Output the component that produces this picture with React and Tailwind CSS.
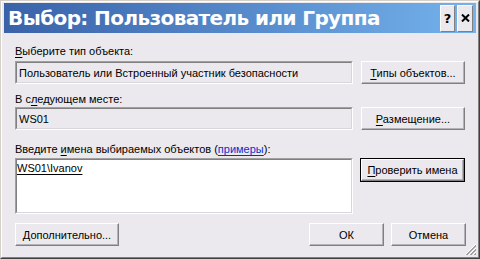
import React from 'react';

const font = { fontFamily: '"Liberation Sans", Arial, sans-serif' };

// classic raised button
const Btn = ({ children, isDefault = false, className = '' }) => (
  <div className={`${isDefault ? 'border border-black' : ''} ${className}`}>
    <div className="h-full flex items-center justify-center border border-t-white border-l-white border-r-[#808080] border-b-[#808080] bg-[#ebe9ed] shadow-[inset_-1px_-1px_#b4b2b6] text-[11px] leading-[14px] text-black">
      {children}
    </div>
  </div>
);

const Field = ({ children, white = false, className = '' }) => (
  <div className={`border border-t-[#a0a0a0] border-l-[#a0a0a0] border-r-white border-b-white ${className}`}>
    <div className={`h-full border border-t-[#808080] border-l-[#808080] border-r-[#d8d6da] border-b-[#d8d6da] ${white ? 'bg-white' : 'bg-[#ebe9ed]'}`}>
      {children}
    </div>
  </div>
);

const U = ({ children }) => <span className="underline underline-offset-2">{children}</span>;

export default function App() {
  return (
    <div className="w-[480px] h-[259px] bg-[#ebe9ed]" style={font}>
      <div className="h-full border border-t-[#d4d0c8] border-l-[#d4d0c8] border-r-[#404040] border-b-[#404040]">
        <div className="h-full border border-t-white border-l-white border-r-[#808080] border-b-[#808080] relative">
          {/* title bar */}
          <div className="mx-[2px] mt-[1px] h-[30px] bg-gradient-to-r from-[#3a62a9] to-[#74b2ec] flex items-center pl-[4px] pr-[3px]">
            <span className="text-white font-bold text-[20px] leading-[24px] tracking-[-0.6px] flex-1 whitespace-nowrap" style={{ fontFamily: '"DejaVu Sans", Verdana, sans-serif' }}>
              Выбор: Пользователь или Группа
            </span>
            <div className="flex gap-[2px]">
              <div className="w-[15px] h-[27px] bg-[#ebe9ed] border border-t-white border-l-white border-r-[#808080] border-b-[#808080] flex items-center justify-center">
                <span className="font-bold text-[13px] leading-none text-black" style={{ fontFamily: '"DejaVu Sans", sans-serif' }}>?</span>
              </div>
              <div className="w-[16px] h-[27px] bg-[#ebe9ed] border border-t-white border-l-white border-r-[#808080] border-b-[#808080] flex items-center justify-center">
                <svg width="9" height="8" viewBox="0 0 9 8">
                  <path d="M1 0.5 L8 7.5 M8 0.5 L1 7.5" stroke="black" strokeWidth="2" />
                </svg>
              </div>
            </div>
          </div>

          {/* body */}
          <div className="pl-[13px] pr-[12px]">
            <div className="mt-[11px] mb-[3px] h-[14px] text-[11px] leading-[14px] text-black">
              <U>В</U>ыберите тип объекта:
            </div>
            <div className="flex gap-[8px] h-[23px]">
              <Field className="w-[338px]">
                <div className="h-full flex items-center pl-[2px] text-[11px] leading-[14px] text-black whitespace-nowrap">
                  Пользователь или Встроенный участник безопасности
                </div>
              </Field>
              <Btn className="w-[104px]"><span><U>Т</U>ипы объектов...</span></Btn>
            </div>

            <div className="mt-[8px] mb-[1px] h-[14px] text-[11px] leading-[14px] text-black">
              В с<U>л</U>едующем месте:
            </div>
            <div className="flex gap-[8px] h-[23px]">
              <Field className="w-[338px]">
                <div className="h-full flex items-center pl-[2px] text-[11px] leading-[14px] text-black">WS01</div>
              </Field>
              <Btn className="w-[104px]"><span><U>Р</U>азмещение...</span></Btn>
            </div>

            <div className="mt-[12px] mb-[2px] h-[14px] text-[11px] leading-[14px] text-black">
              Введите <U>и</U>мена выбираемых объектов (<span className="text-[#0a2fc8] underline underline-offset-2">примеры</span>):
            </div>
            <div className="flex gap-[7px]">
              <Field white className="w-[338px] h-[56px]">
                <div className="pt-[1px] pl-0 text-[11px] leading-[14px] text-black">
                  <U>WS01\Ivanov</U>
                </div>
              </Field>
              <Btn isDefault className="w-[105px] h-[24px]"><span><U>П</U>роверить имена</span></Btn>
            </div>

            <div className="mt-[9px] flex h-[23px]">
              <Btn className="w-[104px]"><span><U>Д</U>ополнительно...</span></Btn>
              <div className="flex-1" />
              <Btn className="w-[75px] mr-[7px]"><span>ОК</span></Btn>
              <Btn className="w-[75px]"><span>Отмена</span></Btn>
            </div>
          </div>

          {/* size grip */}
          <svg className="absolute right-[1px] bottom-[1px]" width="13" height="13" viewBox="0 0 13 13">
            <path d="M12 1 L1 12 M12 5 L5 12 M12 9 L9 12" stroke="white" strokeWidth="1" />
            <path d="M12 2 L2 12 M12 3 L3 12 M12 6 L6 12 M12 7 L7 12 M12 10 L10 12 M12 11 L11 12" stroke="#a0a0a0" strokeWidth="1" />
          </svg>
        </div>
      </div>
    </div>
  );
}
